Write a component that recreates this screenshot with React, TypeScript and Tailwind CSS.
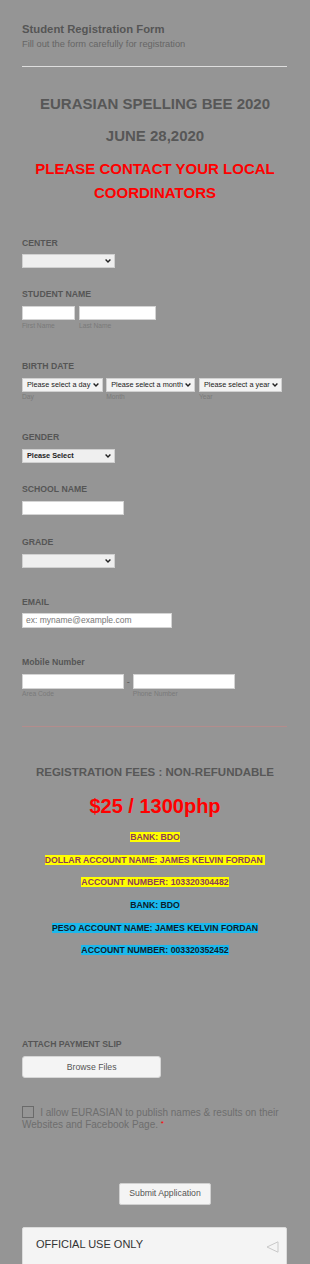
import type { ReactNode } from "react";

const font = { fontFamily: '"Liberation Sans", Arial, sans-serif' };

function Label({ children, className = "" }: { children: ReactNode; className?: string }) {
  return (
    <div className={`text-[8.7px] leading-[11px] font-bold text-[#555] ${className}`}>{children}</div>
  );
}

function Sub({ children, className = "" }: { children: ReactNode; className?: string }) {
  return <div className={`text-[6.7px] leading-[8px] text-[#7a7a7a] ${className}`}>{children}</div>;
}

function Chevron() {
  return (
    <svg width="6" height="4" viewBox="0 0 6 4" className="shrink-0">
      <path d="M0.6 0.6 L3 3 L5.4 0.6" fill="none" stroke="#222" strokeWidth="1.4" />
    </svg>
  );
}

function FakeSelect({
  width,
  text,
  bold,
  className = "",
}: {
  width: string;
  text?: string;
  bold?: boolean;
  className?: string;
}) {
  return (
    <div
      className={`flex h-[14px] items-center justify-between border border-[#d0d0d0] bg-[#efefef] pl-[4px] pr-[3px] ${width} ${className}`}
    >
      <span className={`whitespace-nowrap text-[7.3px] leading-none text-[#222] ${bold ? "font-bold text-[7.1px]" : ""}`}>
        {text}
      </span>
      <Chevron />
    </div>
  );
}

function Input({ width, className = "", placeholder }: { width: string; className?: string; placeholder?: string }) {
  return (
    <div className={`flex h-[14.6px] items-center border border-[#d4d4d4] bg-white px-[3px] ${width} ${className}`}>
      {placeholder && <span className="whitespace-nowrap text-[8.5px] leading-none text-[#777]">{placeholder}</span>}
    </div>
  );
}

const banks = [
  { text: "BANK: BDO", bg: "bg-[#ffff00]", color: "text-[#8b3b5b]" },
  { text: "DOLLAR ACCOUNT NAME: JAMES KELVIN FORDAN\u00a0", bg: "bg-[#ffff00]", color: "text-[#8b3b5b]" },
  { text: "ACCOUNT NUMBER: 103320304482", bg: "bg-[#ffff00]", color: "text-[#8b3b5b]" },
  { text: "BANK: BDO", bg: "bg-[#1bb8ec]", color: "text-[#0d1b2a]" },
  { text: "PESO ACCOUNT NAME: JAMES KELVIN FORDAN", bg: "bg-[#1bb8ec]", color: "text-[#0d1b2a]" },
  { text: "ACCOUNT NUMBER: 003320352452", bg: "bg-[#1bb8ec]", color: "text-[#0d1b2a]" },
];

export default function App() {
  return (
    <div style={font} className="min-h-[1264px] w-[310px] overflow-hidden bg-[#959595] px-[22px] pt-[21.7px]">
      <div className="text-[11.3px] leading-[14px] font-bold text-[#555]">Student Registration Form</div>
      <div className="mt-[2px] text-[9.3px] leading-[12px] text-[#666]">Fill out the form carefully for registration</div>
      <div className="mt-[16px] h-px w-[265px] bg-[#dedede]" />

      <div className="mt-[28px] text-center text-[15px] leading-[18px] font-bold text-[#575757]">EURASIAN SPELLING BEE 2020</div>
      <div className="mt-[14.7px] text-center text-[15px] leading-[18px] font-bold text-[#575757]">JUNE 28,2020</div>
      <div className="mt-[11.8px] text-center text-[15px] leading-[23.5px] font-bold text-[#ff0000]">
        PLEASE CONTACT YOUR LOCAL
        <br />
        COORDINATORS
      </div>

      <Label className="mt-[33.6px]">CENTER</Label>
      <FakeSelect width="w-[93px]" className="mt-[5.1px]" />

      <Label className="mt-[21.5px]">STUDENT NAME</Label>
      <div className="mt-[5.5px] flex gap-[3.7px]">
        <div>
          <Input width="w-[53.3px]" />
          <Sub className="mt-[2px]">First Name</Sub>
        </div>
        <div>
          <Input width="w-[77px]" />
          <Sub className="mt-[2px]">Last Name</Sub>
        </div>
      </div>

      <Label className="mt-[30.8px]">BIRTH DATE</Label>
      <div className="mt-[5.5px] flex gap-[3.5px]">
        <div>
          <FakeSelect width="w-[80.7px]" text="Please select a day" className="bg-[#f3f3f3]" />
          <Sub className="mt-[1.3px]">Day</Sub>
        </div>
        <div>
          <FakeSelect width="w-[89.3px]" text="Please select a month" className="bg-[#f3f3f3]" />
          <Sub className="mt-[1.3px]">Month</Sub>
        </div>
        <div>
          <FakeSelect width="w-[83px]" text="Please select a year" className="bg-[#f3f3f3]" />
          <Sub className="mt-[1.3px]">Year</Sub>
        </div>
      </div>

      <Label className="mt-[31.2px]">GENDER</Label>
      <FakeSelect width="w-[93px]" text="Please Select" bold className="mt-[5.8px]" />

      <Label className="mt-[21.2px]">SCHOOL NAME</Label>
      <Input width="w-[102px]" className="mt-[5.5px]" />

      <Label className="mt-[21.9px]">GRADE</Label>
      <FakeSelect width="w-[93px]" className="mt-[5.5px]" />

      <Label className="mt-[29.2px]">EMAIL</Label>
      <Input width="w-[150.3px]" className="mt-[5.5px]" placeholder="ex: myname@example.com" />

      <Label className="mt-[29.5px]">Mobile Number</Label>
      <div className="mt-[5.5px] flex">
        <div>
          <Input width="w-[102px]" />
          <Sub className="mt-[1.6px]">Area Code</Sub>
        </div>
        <div className="w-[8.7px] pt-[1px] text-center text-[9px] leading-[14px] text-[#555]">-</div>
        <div>
          <Input width="w-[102px]" />
          <Sub className="mt-[1.6px]">Phone Number</Sub>
        </div>
      </div>

      <div className="mt-[28px] h-px w-[265px] bg-[#b48c8c]" />

      <div className="mt-[37.4px] text-center text-[11.5px] leading-[14px] font-bold text-[#575757]">
        REGISTRATION FEES : NON-REFUNDABLE
      </div>
      <div className="mt-[15.3px] text-center text-[20px] leading-[24px] font-bold text-[#ff0000]">$25 / 1300php</div>

      <div className="mt-[14px] flex flex-col items-center gap-[12.7px]">
        {banks.map((b, i) => (
          <div key={i} className="h-[10px] text-[8.7px] leading-[10px] font-bold">
            <span className={`whitespace-pre ${b.bg} ${b.color}`}>{b.text}</span>
          </div>
        ))}
      </div>

      <Label className="mt-[83.8px]">ATTACH PAYMENT SLIP</Label>
      <div className="mt-[5.8px] flex h-[22.4px] w-[139.3px] items-center justify-center rounded-[3px] border border-[#d6d6d6] bg-[#f4f4f4] text-[8.7px] text-[#555]">
        Browse Files
      </div>

      <p className="mt-[28.2px] w-[265px] text-[10px] leading-[12.3px] text-[#6e6e6e]">
        <span className="mr-[6.7px] inline-block h-[11.5px] w-[11.5px] border border-[#6a6a6a] align-[-2px]" />
        I allow EURASIAN to publish names &amp; results on their Websites and Facebook Page.{" "}
        <span className="align-[2px] text-[8px] leading-none text-[#ff0000]">*</span>
      </p>

      <div className="ml-[97.3px] mt-[51.3px] flex h-[22.3px] w-[91.4px] items-center justify-center rounded-[2px] border border-[#d0d0d0] bg-[#f4f4f4] text-[8.7px] text-[#555]">
        Submit Application
      </div>

      <div className="mt-[22.3px] flex h-[42px] w-[265px] items-start justify-between rounded-[2px] border border-[#dcdcdc] bg-[#f4f4f4] pl-[13px] pr-[7.5px] pt-[8.5px]">
        <span className="text-[11px] leading-[14px] text-[#333]">OFFICIAL USE ONLY</span>
        <svg width="13" height="12" viewBox="0 0 13 12" className="mt-[4px]">
          <polygon points="12,0.8 12,11.2 1,6" fill="#f4f4f4" stroke="#c8c8c8" strokeWidth="1" />
        </svg>
      </div>
    </div>
  );
}
